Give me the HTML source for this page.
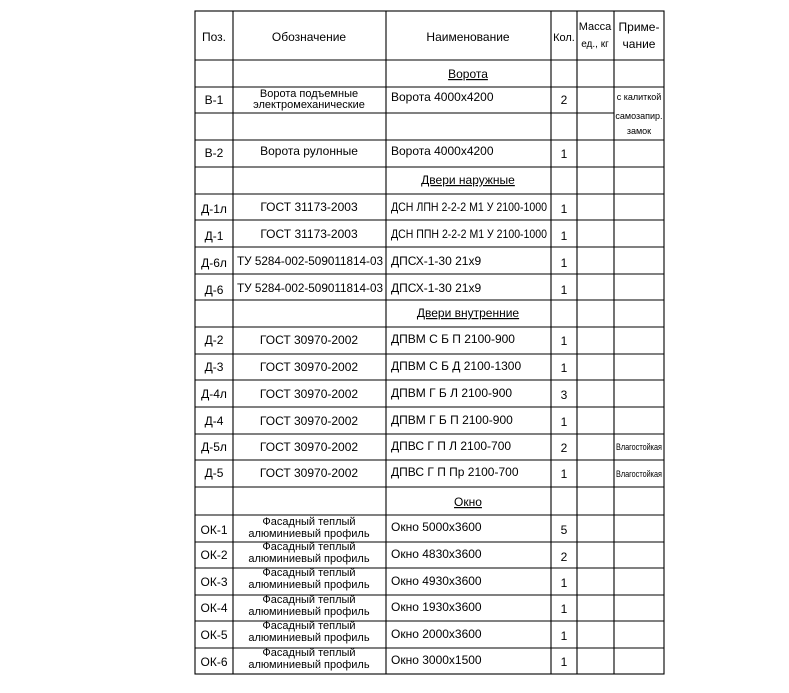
<!DOCTYPE html>
<html><head><meta charset="utf-8"><style>
html,body{margin:0;padding:0;background:#fff;width:789px;height:693px;overflow:hidden}
svg text{font-family:"Liberation Sans",sans-serif;fill:#000}
</style></head><body>
<svg width="789" height="693" viewBox="0 0 789 693" xmlns="http://www.w3.org/2000/svg">
<g stroke="#000" stroke-width="1.1" fill="none">
<rect x="195" y="11" width="469" height="663"/>
<line x1="233" y1="11" x2="233" y2="674"/>
<line x1="386" y1="11" x2="386" y2="674"/>
<line x1="551" y1="11" x2="551" y2="674"/>
<line x1="577" y1="11" x2="577" y2="674"/>
<line x1="614" y1="11" x2="614" y2="674"/>
<line x1="195" y1="60" x2="664" y2="60"/>
<line x1="195" y1="87" x2="664" y2="87"/>
<line x1="195" y1="113" x2="614" y2="113"/>
<line x1="195" y1="140" x2="664" y2="140"/>
<line x1="195" y1="167" x2="664" y2="167"/>
<line x1="195" y1="194" x2="664" y2="194"/>
<line x1="195" y1="220" x2="664" y2="220"/>
<line x1="195" y1="247" x2="664" y2="247"/>
<line x1="195" y1="274" x2="664" y2="274"/>
<line x1="195" y1="300" x2="664" y2="300"/>
<line x1="195" y1="327" x2="664" y2="327"/>
<line x1="195" y1="354" x2="664" y2="354"/>
<line x1="195" y1="380" x2="664" y2="380"/>
<line x1="195" y1="407" x2="664" y2="407"/>
<line x1="195" y1="434" x2="664" y2="434"/>
<line x1="195" y1="460" x2="664" y2="460"/>
<line x1="195" y1="487" x2="664" y2="487"/>
<line x1="195" y1="515" x2="664" y2="515"/>
<line x1="195" y1="542" x2="664" y2="542"/>
<line x1="195" y1="568" x2="664" y2="568"/>
<line x1="195" y1="595" x2="664" y2="595"/>
<line x1="195" y1="621" x2="664" y2="621"/>
<line x1="195" y1="648" x2="664" y2="648"/>
</g>
<g font-size="12">
<text x="214" y="41" text-anchor="middle" font-size="12">Поз.</text>
<text x="309" y="41" text-anchor="middle" font-size="12">Обозначение</text>
<text x="468" y="41" text-anchor="middle" font-size="12">Наименование</text>
<text x="564" y="41" text-anchor="middle" font-size="11">Кол.</text>
<text x="595" y="30" text-anchor="middle" font-size="11">Масса</text>
<text x="595" y="47" text-anchor="middle" font-size="10">ед., кг</text>
<text x="639" y="31" text-anchor="middle" font-size="12">Приме-</text>
<text x="639" y="48" text-anchor="middle" font-size="12">чание</text>

<text x="468" y="78" text-anchor="middle" text-decoration="underline">Ворота</text>
<text x="214" y="104" text-anchor="middle">В-1</text>
<text x="309" y="97" text-anchor="middle" font-size="11">Ворота подъемные</text>
<text x="309" y="108" text-anchor="middle" font-size="11">электромеханические</text>
<text x="391" y="101">Ворота 4000x4200</text>
<text x="564" y="104" text-anchor="middle">2</text>
<text x="639" y="100" text-anchor="middle" font-size="9">с калиткой</text>
<text x="639" y="119" text-anchor="middle" font-size="9">самозапир.</text>
<text x="639" y="134" text-anchor="middle" font-size="9">замок</text>
<text x="214" y="157" text-anchor="middle">В-2</text>
<text x="309" y="155" text-anchor="middle">Ворота рулонные</text>
<text x="391" y="155">Ворота 4000x4200</text>
<text x="564" y="158" text-anchor="middle">1</text>

<text x="468" y="184" text-anchor="middle" text-decoration="underline">Двери наружные</text>
<text x="214" y="213" text-anchor="middle">Д-1л</text>
<text x="309" y="211" text-anchor="middle">ГОСТ 31173-2003</text>
<text x="391" y="211" textLength="156" lengthAdjust="spacingAndGlyphs">ДСН ЛПН 2-2-2 М1 У 2100-1000</text>
<text x="564" y="213" text-anchor="middle">1</text>
<text x="214" y="240" text-anchor="middle">Д-1</text>
<text x="309" y="238" text-anchor="middle">ГОСТ 31173-2003</text>
<text x="391" y="238" textLength="156" lengthAdjust="spacingAndGlyphs">ДСН ППН 2-2-2 М1 У 2100-1000</text>
<text x="564" y="240" text-anchor="middle">1</text>
<text x="214" y="267" text-anchor="middle">Д-6л</text>
<text x="237" y="265" textLength="146" lengthAdjust="spacingAndGlyphs">ТУ 5284-002-509011814-03</text>
<text x="391" y="265">ДПСХ-1-30 21x9</text>
<text x="564" y="267" text-anchor="middle">1</text>
<text x="214" y="294" text-anchor="middle">Д-6</text>
<text x="237" y="292" textLength="146" lengthAdjust="spacingAndGlyphs">ТУ 5284-002-509011814-03</text>
<text x="391" y="292">ДПСХ-1-30 21x9</text>
<text x="564" y="294" text-anchor="middle">1</text>

<text x="468" y="317" text-anchor="middle" text-decoration="underline">Двери внутренние</text>
<text x="214" y="344" text-anchor="middle">Д-2</text>
<text x="309" y="344" text-anchor="middle">ГОСТ 30970-2002</text>
<text x="391" y="343">ДПВМ С Б П 2100-900</text>
<text x="564" y="345" text-anchor="middle">1</text>
<text x="214" y="371" text-anchor="middle">Д-3</text>
<text x="309" y="371" text-anchor="middle">ГОСТ 30970-2002</text>
<text x="391" y="370">ДПВМ С Б Д 2100-1300</text>
<text x="564" y="372" text-anchor="middle">1</text>
<text x="214" y="398" text-anchor="middle">Д-4л</text>
<text x="309" y="398" text-anchor="middle">ГОСТ 30970-2002</text>
<text x="391" y="397">ДПВМ Г Б Л 2100-900</text>
<text x="564" y="399" text-anchor="middle">3</text>
<text x="214" y="425" text-anchor="middle">Д-4</text>
<text x="309" y="425" text-anchor="middle">ГОСТ 30970-2002</text>
<text x="391" y="424">ДПВМ Г Б П 2100-900</text>
<text x="564" y="426" text-anchor="middle">1</text>
<text x="214" y="451" text-anchor="middle">Д-5л</text>
<text x="309" y="451" text-anchor="middle">ГОСТ 30970-2002</text>
<text x="391" y="450">ДПВС Г П Л 2100-700</text>
<text x="564" y="452" text-anchor="middle">2</text>
<text x="639" y="450" text-anchor="middle" font-size="9" textLength="46" lengthAdjust="spacingAndGlyphs">Влагостойкая</text>
<text x="214" y="477" text-anchor="middle">Д-5</text>
<text x="309" y="477" text-anchor="middle">ГОСТ 30970-2002</text>
<text x="391" y="476">ДПВС Г П Пр 2100-700</text>
<text x="564" y="478" text-anchor="middle">1</text>
<text x="639" y="477" text-anchor="middle" font-size="9" textLength="46" lengthAdjust="spacingAndGlyphs">Влагостойкая</text>

<text x="468" y="506" text-anchor="middle" text-decoration="underline">Окно</text>
</g>
<g font-size="12">
<g transform="translate(0,515)">
<text x="214" y="19" text-anchor="middle">ОК-1</text><text x="309" y="10" text-anchor="middle" font-size="11">Фасадный теплый</text><text x="309" y="22" text-anchor="middle" font-size="11">алюминиевый профиль</text><text x="391" y="16">Окно 5000x3600</text><text x="564" y="19" text-anchor="middle">5</text>
</g>
<g transform="translate(0,542)">
<text x="214" y="17" text-anchor="middle">ОК-2</text><text x="309" y="8" text-anchor="middle" font-size="11">Фасадный теплый</text><text x="309" y="20" text-anchor="middle" font-size="11">алюминиевый профиль</text><text x="391" y="16">Окно 4830x3600</text><text x="564" y="19" text-anchor="middle">2</text>
</g>
<g transform="translate(0,568)">
<text x="214" y="18" text-anchor="middle">ОК-3</text><text x="309" y="8" text-anchor="middle" font-size="11">Фасадный теплый</text><text x="309" y="20" text-anchor="middle" font-size="11">алюминиевый профиль</text><text x="391" y="17">Окно 4930x3600</text><text x="564" y="19" text-anchor="middle">1</text>
</g>
<g transform="translate(0,595)">
<text x="214" y="17" text-anchor="middle">ОК-4</text><text x="309" y="8" text-anchor="middle" font-size="11">Фасадный теплый</text><text x="309" y="20" text-anchor="middle" font-size="11">алюминиевый профиль</text><text x="391" y="16">Окно 1930x3600</text><text x="564" y="18" text-anchor="middle">1</text>
</g>
<g transform="translate(0,621)">
<text x="214" y="18" text-anchor="middle">ОК-5</text><text x="309" y="8" text-anchor="middle" font-size="11">Фасадный теплый</text><text x="309" y="20" text-anchor="middle" font-size="11">алюминиевый профиль</text><text x="391" y="17">Окно 2000x3600</text><text x="564" y="19" text-anchor="middle">1</text>
</g>
<g transform="translate(0,648)">
<text x="214" y="18" text-anchor="middle">ОК-6</text><text x="309" y="8" text-anchor="middle" font-size="11">Фасадный теплый</text><text x="309" y="20" text-anchor="middle" font-size="11">алюминиевый профиль</text><text x="391" y="16">Окно 3000x1500</text><text x="564" y="18" text-anchor="middle">1</text>
</g>
</g>
</svg>
</body></html>
